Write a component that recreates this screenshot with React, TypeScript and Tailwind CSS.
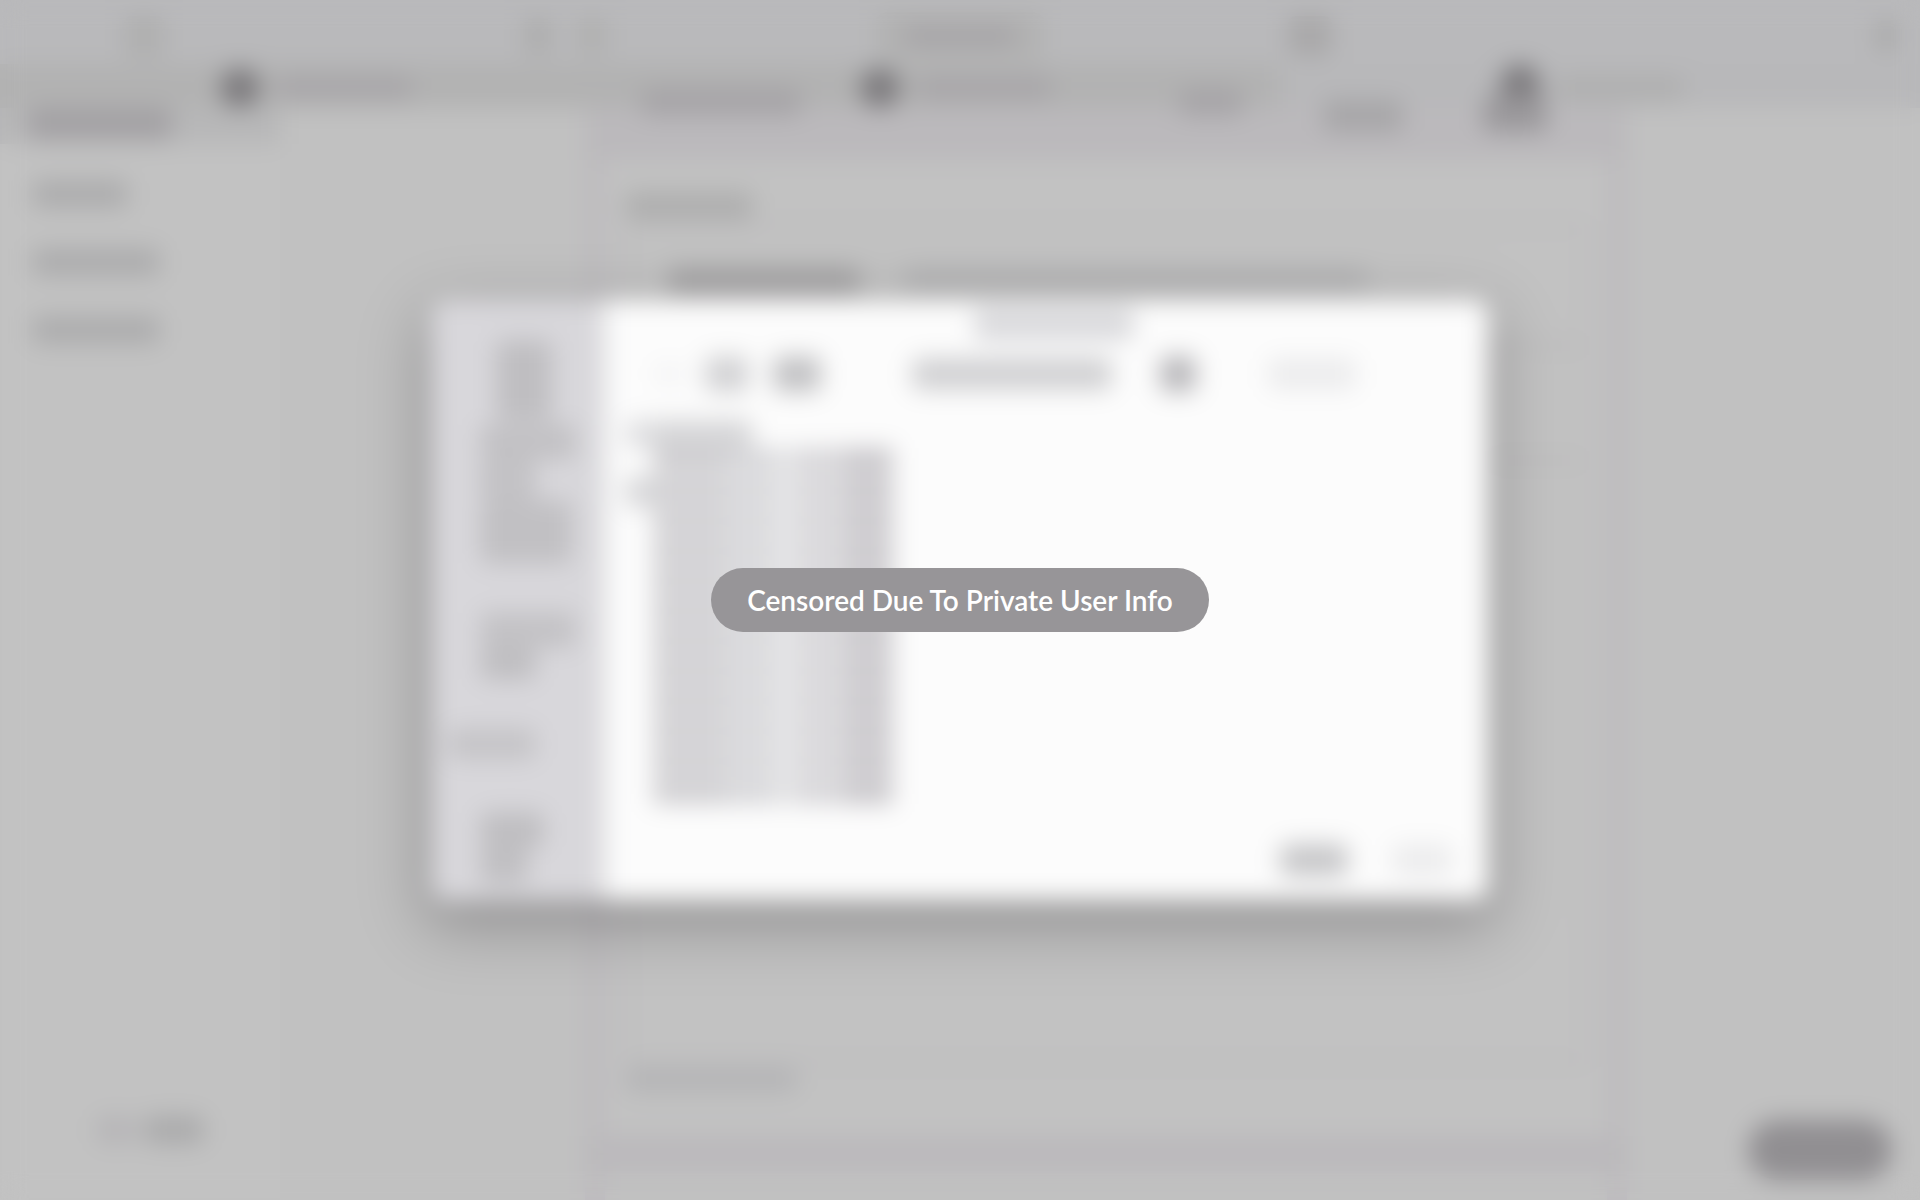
import React from "react";
import clsx from "clsx";

// Placeholder shape standing in for hidden content
const Block = ({ className }: { className: string }) => (
  <div className={clsx("shrink-0 rounded-lg", className)} />
);

const tabs = [
  { dot: "h-10 w-10 bg-[#7c7a7d]", label: "h-6 w-34 bg-[#a8a6a9]", bg: "bg-[#b2b2b2]" },
  { dot: "h-10 w-10 bg-[#7c7a7d]", label: "h-6 w-34 bg-[#a8a6a9]", bg: "bg-[#b2b2b2]" },
  { dot: "h-12 w-10 bg-[#7c7a7d]", label: "h-6 w-32 bg-[#afafaf]", bg: "bg-[#b8b8ba]" },
];

const navItems = ["w-24", "w-32", "w-32"];

const listRows = Array.from({ length: 12 }, (_, i) => i);

const TopBars = () => (
  <header>
    <div className="grid h-16 grid-cols-3 items-center bg-[#b9b9bb] pt-2">
      <div className="flex items-center pl-31 pr-8">
        <Block className="h-10 w-10 bg-[#afafaf]" />
        <div className="flex flex-1 justify-end gap-6">
          <Block className="h-9 w-7 bg-[#adadad]" />
          <Block className="h-9 w-8 bg-[#b0b0b0]" />
        </div>
      </div>
      <div className="flex justify-center">
        <div className="flex h-12 w-42 items-center justify-center rounded-xl bg-[#b2b2b2]">
          <Block className="h-5 w-28 bg-[#a6a4a7]" />
        </div>
      </div>
      <div className="flex items-center justify-between pl-2 pr-6">
        <Block className="h-10 w-11 bg-[#a9a8a9]" />
        <Block className="h-8 w-5 bg-[#a8a8a8]" />
      </div>
    </div>
    <div className="grid h-11 grid-cols-3">
      {tabs.map((tab, i) => (
        <div key={i} className={clsx("flex items-center gap-4 pl-55", tab.bg)}>
          <div className={clsx("shrink-0 rounded-full", tab.dot)} />
          <Block className={tab.label} />
        </div>
      ))}
    </div>
  </header>
);

const Sidebar = () => (
  <aside className="flex w-70 flex-col bg-[#c2c2c2]">
    <div className="h-9 bg-[#b7b7b8] px-7">
      <Block className="h-8 w-36 bg-[#a3a1a4]" />
    </div>
    <nav className="flex flex-col gap-10 px-8 pt-9">
      {navItems.map((width, i) => (
        <Block key={i} className={clsx("h-7 bg-[#acacad]", width)} />
      ))}
    </nav>
    <div className="mt-auto flex gap-2 px-24 pb-14">
      <Block className="h-7 w-10 bg-[#b6b5b7]" />
      <Block className="h-7 w-15 bg-[#aaaaab]" />
    </div>
  </aside>
);

const Document = () => (
  <main className="flex flex-1 flex-col bg-[#c1c1c1] pl-3">
    <div className="mx-auto flex w-[64%] flex-1 flex-col">
      <div className="flex h-13 items-start bg-[#bbb9bc] pl-14 pr-20">
        <Block className="-mt-5 h-7 w-40 bg-[#a6a4a7]" />
        <div className="flex flex-1 justify-end gap-20">
          <Block className="-mt-5 h-7 w-16 bg-[#a6a4a7]" />
          <Block className="-mt-2 h-8 w-20 bg-[#a7a6a8]" />
          <Block className="-mt-3 h-9 w-16 bg-[#9a989b]" />
        </div>
      </div>
      <div className="flex flex-1 flex-col border-x-20 border-[#bdbbbe] bg-[#c2c2c2] px-5 pt-8">
        <Block className="h-7 w-32 bg-[#aeaeae]" />
        <div className="mt-1 flex flex-1 flex-col border-3 border-[#b6b4b7] pt-10">
          <div className="flex gap-11 pl-10">
            <Block className="h-7 w-48 bg-[#a5a4a5]" />
            <Block className="h-6 w-116 bg-[#b3b3b4]" />
          </div>
          <div className="mt-12 h-30 border-y-5 border-[#b8b7b8]" />
        </div>
        <Block className="mt-1 h-6 w-43 bg-[#b4b4b6]" />
        <div className="h-11" />
      </div>
      <div className="h-9 bg-[#bbb9bc]" />
      <div className="h-7 border-x-20 border-[#bdbbbe]" />
    </div>
  </main>
);

const Dialog = () => (
  <div className="flex h-1/2 w-[55%] overflow-hidden rounded-2xl bg-[#fcfcfc]">
    <div className="flex w-[16%] flex-col bg-[#d8d7db] pl-4 pt-10">
      <Block className="h-20 w-14 self-center bg-[#bfbec1]" />
      <div className="flex flex-col pl-8 pt-1">
        <Block className="h-9 w-24 bg-[#c2c1c4]" />
        <Block className="h-10 w-14 bg-[#c3c2c5]" />
        <Block className="h-16 w-23 bg-[#c1c0c3]" />
      </div>
      <div className="flex flex-col pl-8 pt-12">
        <Block className="h-9 w-24 bg-[#c3c2c5]" />
        <Block className="h-8 w-14 bg-[#bfbec1]" />
      </div>
      <Block className="mt-12 h-8 w-22 bg-[#c5c4c7]" />
      <Block className="ml-8 mt-13 h-9 w-16 bg-[#bfbec1]" />
      <Block className="ml-8 h-9 w-12 bg-[#c0bfc2]" />
    </div>
    <div className="w-2 bg-[#ececed]" />
    <div className="flex flex-1 flex-col">
      <div className="flex justify-center pl-3 pt-2">
        <Block className="h-8 w-40 bg-[#d9d9dc]" />
      </div>
      <div className="flex items-center pl-11 pr-33 pt-4">
        <Block className="h-5 w-8 bg-[#f3f3f4]" />
        <Block className="ml-5 h-9 w-11 bg-[#d2d2d4]" />
        <Block className="ml-6 h-9 w-12 bg-[#c2c2c4]" />
        <div className="flex flex-1 items-center justify-end gap-12">
          <Block className="h-8 w-50 bg-[#d0d0d2]" />
          <Block className="h-9 w-9 bg-[#b8b7ba]" />
          <Block className="ml-6 h-8 w-22 bg-[#ececed]" />
        </div>
      </div>
      <div className="flex pl-4 pt-7">
        <div className="flex w-7 flex-col gap-7">
          <Block className="h-7 w-10 bg-[#dfdfe1]" />
          <Block className="h-8 w-8 bg-[#d8d8da]" />
        </div>
        <div className="flex flex-col">
          <Block className="h-7 w-25 bg-[#d5d5d7]" />
          {listRows.map((row) => (
            <div key={row} className="flex pb-1">
              <div className="h-[26px] w-18 bg-[#cfced1]" />
              <div className="h-[26px] w-12 bg-[#d6d6d9]" />
              <div className="h-[26px] w-6 bg-[#e2e2e4]" />
              <div className="h-[26px] w-12 bg-[#d6d5d8]" />
              <div className="h-[26px] w-12 bg-[#c8c6ca]" />
            </div>
          ))}
        </div>
      </div>
      <div className="mt-auto flex justify-end gap-11 pb-6 pr-9">
        <Block className="h-8 w-17 bg-[#c6c6c8]" />
        <Block className="h-8 w-15 bg-[#ececed]" />
      </div>
    </div>
  </div>
);

const App = () => {
  return (
    <div className="relative flex min-h-screen flex-col overflow-hidden bg-[#c1c1c1] font-[Lato,sans-serif]">
      <div aria-hidden="true" className="flex flex-1 flex-col">
        <TopBars />
        <div className="flex flex-1">
          <Sidebar />
          <Document />
        </div>
      </div>

      {/* Floating action in the corner */}
      <div
        aria-hidden="true"
        className="absolute bottom-5 right-7 h-15 w-36 rounded-full bg-[#918f92]"
      />

      {/* Dialog shadow, then the dialog */}
      <div aria-hidden="true" className="absolute inset-0 flex items-center justify-center">
        <div className="h-1/2 w-[55%] rounded-2xl shadow-[0_20px_56px_8px_rgba(60,55,60,0.34)]" />
      </div>
      <div aria-hidden="true" className="absolute inset-0 flex items-center justify-center">
        <Dialog />
      </div>

      {/* Everything below this layer is blurred out */}
      <div className="absolute inset-0 backdrop-blur-[12px]" />

      <div className="absolute inset-0 flex items-center justify-center">
        <p className="rounded-full bg-[#979598] px-9 py-4 text-[28px] leading-8 font-semibold text-white">
          Censored Due To Private User Info
        </p>
      </div>
    </div>
  );
};

export default App;
